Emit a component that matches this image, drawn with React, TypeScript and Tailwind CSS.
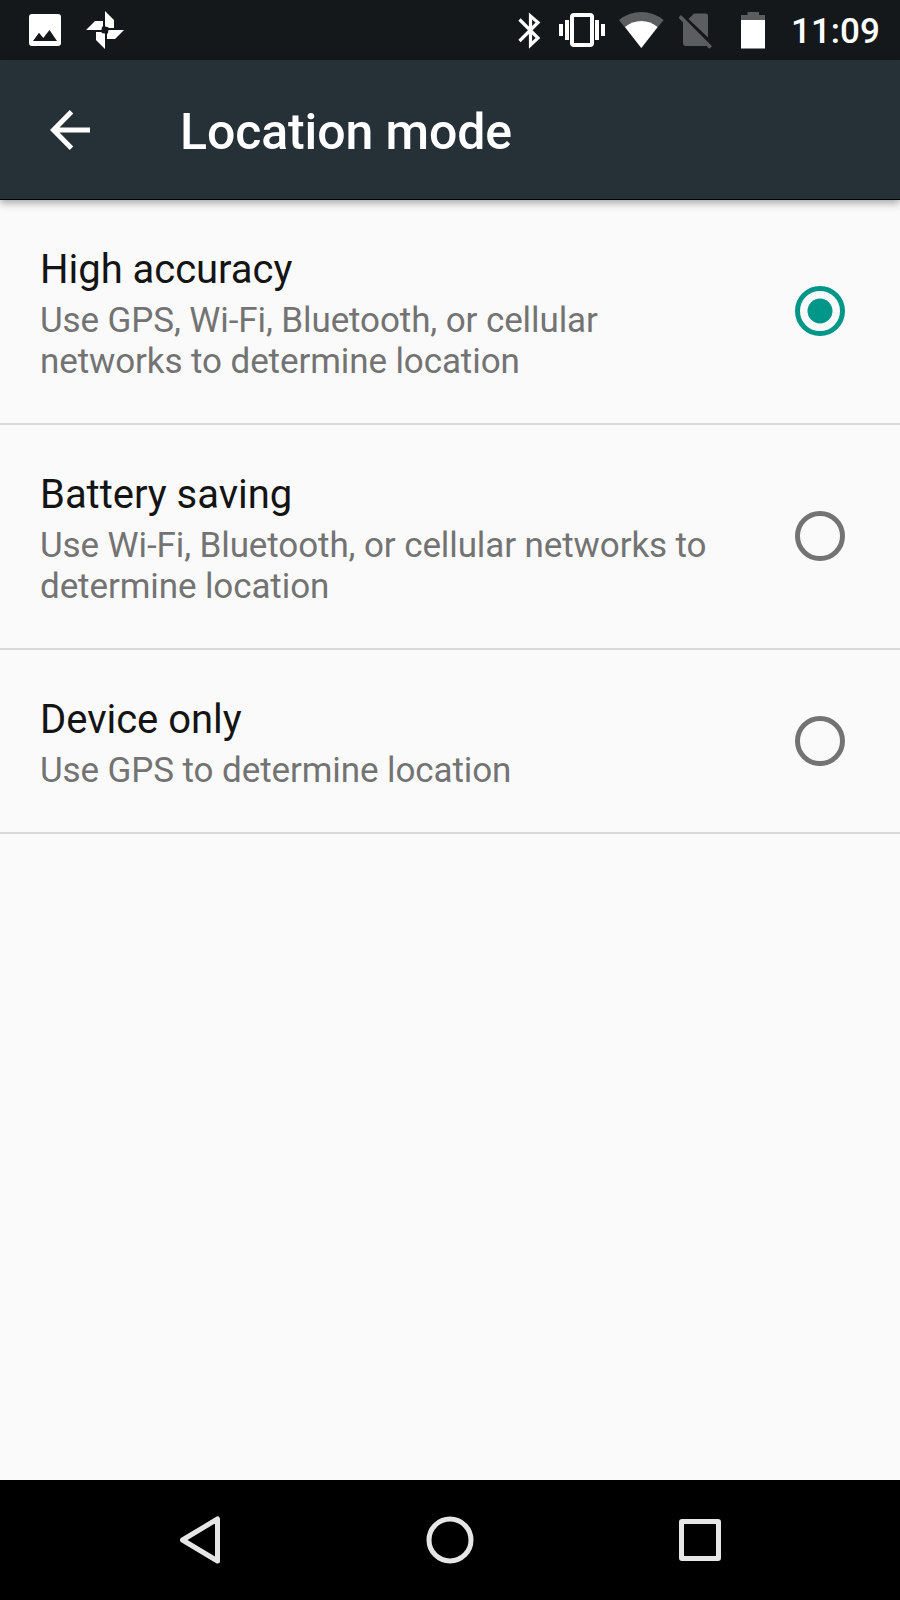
import React, { useState } from 'react';

const MODES = [
  {
    id: 'high',
    title: 'High accuracy',
    summary: ['Use GPS, Wi-Fi, Bluetooth, or cellular', 'networks to determine location'],
  },
  {
    id: 'battery',
    title: 'Battery saving',
    summary: ['Use Wi-Fi, Bluetooth, or cellular networks to', 'determine location'],
  },
  {
    id: 'device',
    title: 'Device only',
    summary: ['Use GPS to determine location'],
  },
];

function StatusBar() {
  return (
    <div className="flex h-[60px] shrink-0 items-center bg-[#14181b] text-white">
      {/* notifications */}
      <svg className="ml-[29px] h-[60px] w-[32px]" viewBox="29 0 32 60" fill="currentColor">
        <path
          fillRule="evenodd"
          d="M32 14H58Q61 14 61 17V43Q61 46 58 46H32Q29 46 29 43V17Q29 14 32 14ZM33 41H57L49.5 30L43.3 38L39 32.8Z"
        />
      </svg>
      <svg className="ml-[25px] h-[60px] w-[38px]" viewBox="86 0 38 60" fill="currentColor">
        <path d="M105 11L114 20V28H109Q108 26.5 105 26.5Z" />
        <path d="M124 30L115 39H107V34Q108.5 33 108.5 30Z" />
        <path d="M105 49L96 40V32H101Q102 33.5 105 33.5Z" />
        <path d="M86 30L95 21H103V26Q101.5 27 101.5 30Z" />
      </svg>

      {/* system state */}
      <svg className="ml-[394px] h-[60px] w-[23px]" viewBox="518 0 23 60" fill="none" stroke="currentColor" strokeWidth="3.2">
        <path d="M519.5 19.5L538 38L530.5 45V16L538 22.5L519.5 41" />
      </svg>
      <svg className="ml-[18px] h-[60px] w-[46px]" viewBox="559 0 46 60" fill="currentColor">
        <path d="M559 24h4v12h-4zM565 20h4v20h-4zM595 20h4v20h-4zM601 24h4v12h-4z" />
        <rect x="572" y="15" width="20" height="30" rx="2" fill="none" stroke="currentColor" strokeWidth="4" />
      </svg>
      <svg className="ml-[14px] h-[60px] w-[45px]" viewBox="619 0 45 60">
        <path d="M641.3 48L619 20Q629 12 641.3 12T663.6 20Z" fill="#5b5d5f" />
        <path d="M641.3 48L625 27Q632 21 641.3 21T657.6 27Z" fill="#fff" />
      </svg>
      <svg className="ml-[14px] h-[60px] w-[35px]" viewBox="678 0 35 60" fill="#5b5d5f">
        <path d="M688.5 19L694 13.5H705.5Q708 13.5 708 16V37.5Z" />
        <path d="M681 15L712 46.2L709.3 48.7L706 45.5Q705.5 46 704 46H686Q683 46 683 43V22.5L678.5 17.6Z" />
      </svg>
      <svg className="ml-[28px] h-[60px] w-[24px]" viewBox="741 0 24 60">
        <path d="M741 20V15H747.5V12H759V15H765V20Z" fill="#5b5d5f" />
        <path d="M741 20H765V48.5H741Z" fill="#fff" />
      </svg>
      <span className="mt-[3px] ml-[26px] text-[35px] leading-[41px] font-medium">11:09</span>
    </div>
  );
}

function AppBar() {
  return (
    <header className="z-10 flex h-[140px] shrink-0 items-center border-b border-black bg-[#263137] text-white shadow-[0_3px_8px_rgba(0,0,0,0.35)]">
      <svg className="ml-[50px] h-[40px] w-[40px]" viewBox="0 0 40 40" fill="none" stroke="currentColor" strokeWidth="5">
        <path d="M40 20H5M21.5 1.8L3.5 20L21.5 38.2" />
      </svg>
      <h1 className="mt-[5px] ml-[90px] text-[50px] leading-[59px] font-medium tracking-[-0.1px]">Location mode</h1>
    </header>
  );
}

function Radio({ checked }: { checked: boolean }) {
  return (
    <svg
      className={`mb-[6px] h-[50px] w-[50px] ${checked ? 'text-[#009688]' : 'text-[#737373]'}`}
      viewBox="0 0 50 50"
    >
      <circle cx="25" cy="25" r="22.5" fill="none" stroke="currentColor" strokeWidth="5" />
      {checked && <circle cx="25" cy="25" r="12.5" fill="currentColor" />}
    </svg>
  );
}

function NavBar() {
  return (
    <nav className="flex h-[120px] shrink-0 items-center bg-black text-[#e6e6e6]">
      <svg className="ml-[179px] h-[50px] w-[42px]" viewBox="0 0 42 50" fill="none" stroke="currentColor" strokeWidth="5" strokeLinejoin="round">
        <path d="M38.5 4V46L3.5 25Z" />
      </svg>
      <svg className="ml-[205px] h-[48px] w-[48px]" viewBox="0 0 48 48" fill="none" stroke="currentColor" strokeWidth="5">
        <circle cx="24" cy="24" r="21" />
      </svg>
      <span className="ml-[205px] h-[42px] w-[42px] rounded-[3px] border-5 border-current" />
    </nav>
  );
}

export default function App() {
  const [mode, setMode] = useState('high');

  return (
    <div className="flex h-[1600px] w-[900px] flex-col overflow-hidden bg-[#fafafa] font-['Roboto',sans-serif]">
      <StatusBar />
      <AppBar />
      <main className="flex-1">
        {MODES.map((m) => (
          <div
            key={m.id}
            onClick={() => setMode(m.id)}
            className="flex items-center justify-between border-b-2 border-[#d9d9d9] pt-[46px] pr-[55px] pb-[41px] pl-[40px]"
          >
            <div>
              <h2 className="text-[40px] leading-[47px] tracking-[-0.03px] text-[#141414]">{m.title}</h2>
              <p className="mt-[7px] text-[35px] leading-[41px] tracking-[-0.1px] whitespace-nowrap text-[#737373]">
                {m.summary.map((line) => (
                  <span key={line} className="block">
                    {line}
                  </span>
                ))}
              </p>
            </div>
            <Radio checked={mode === m.id} />
          </div>
        ))}
      </main>
      <NavBar />
    </div>
  );
}
